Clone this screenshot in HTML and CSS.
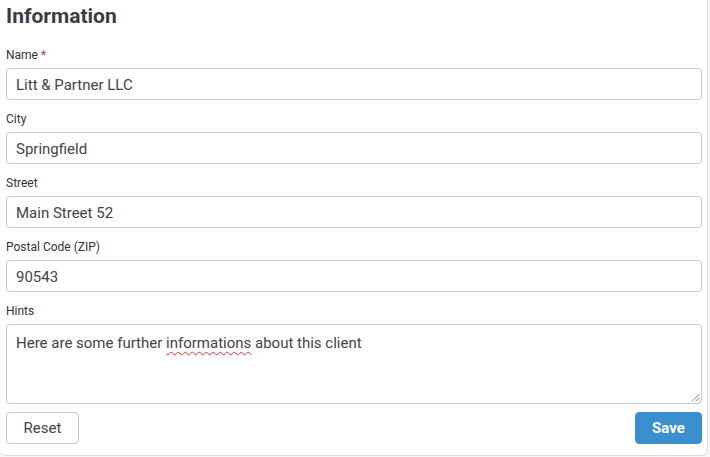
FILE: index.html
```html
<!DOCTYPE html>
<html>
<head>
<meta charset="utf-8">
<link rel="stylesheet" href="styles.css">
</head>
<body>
<div class="card">
  <h2 class="title">Information</h2>
  <form class="form">
    <div class="group">
      <label class="label">Name <span class="req">*</span></label>
      <input class="input" type="text" value="Litt &amp; Partner LLC">
    </div>
    <div class="group">
      <label class="label">City</label>
      <input class="input" type="text" value="Springfield">
    </div>
    <div class="group">
      <label class="label">Street</label>
      <input class="input" type="text" value="Main Street 52">
    </div>
    <div class="group">
      <label class="label">Postal Code (ZIP)</label>
      <input class="input" type="text" value="90543">
    </div>
    <div class="group">
      <label class="label">Hints</label>
      <div class="textarea">Here are some further <span class="misspelled">informations</span> about this client<svg class="grip" width="9" height="9" viewBox="0 0 9 9"><path d="M8.5 1 L1 8.5 M8.5 4.5 L4.5 8.5 M8.5 7.5 L7.5 8.5" stroke="#888" stroke-width="1" fill="none"/></svg></div>
    </div>
    <div class="actions">
      <button type="button" class="btn btn-reset">Reset</button>
      <button type="button" class="btn btn-save">Save</button>
    </div>
  </form>
</div>
</body>
</html>
```
FILE: styles.css
```css
html, body {
  margin: 0;
  padding: 0;
  background: #f6f6f6;
}
body {
  font-family: Roboto, "Liberation Sans", sans-serif;
  color: #333;
}
.card {
  background: #fff;
  margin-top: -6px;
  padding: 6px 5px 10px 6px;
  box-sizing: border-box;
  width: 708px;
  height: 462px;
  border: 1px solid #dcdcdc;
  border-top: none;
  border-left: none;
  border-radius: 0 0 6px 6px;
}
.title {
  margin: 4px 0 0 0;
  font-size: 21px;
  line-height: 25px;
  font-weight: 700;
  color: #3a3d40;
}
.form {
  margin-top: 18px;
  display: flex;
  flex-direction: column;
  gap: 11px;
}
.group {
  display: flex;
  flex-direction: column;
  gap: 5px;
}
.label {
  font-size: 12px;
  line-height: 16px;
  color: #333;
}
.req {
  color: #a94442;
}
.input {
  height: 32px;
  box-sizing: border-box;
  border: 1px solid #c8c8c8;
  border-radius: 4px;
  padding: 2px 9px 0 9px;
  font-family: Roboto, "Liberation Sans", sans-serif;
  font-size: 15px;
  color: #444;
  background: #fff;
  margin: 0;
  width: 100%;
  outline: none;
}
.textarea {
  position: relative;
  height: 80px;
  box-sizing: border-box;
  border: 1px solid #c8c8c8;
  border-radius: 4px;
  padding: 8px 9px;
  font-size: 15px;
  line-height: 20px;
  color: #444;
}
.misspelled {
  text-decoration: underline wavy #e0342c;
  text-decoration-thickness: 1px;
  text-underline-offset: 3px;
}
.grip {
  position: absolute;
  right: 1px;
  bottom: 1px;
}
.actions {
  display: flex;
  justify-content: space-between;
  margin-top: -3px;
}
.btn {
  height: 32px;
  box-sizing: border-box;
  border-radius: 4px;
  font-family: Roboto, "Liberation Sans", sans-serif;
  font-size: 15px;
  padding: 0;
  cursor: pointer;
}
.btn-reset {
  background: #fff;
  border: 1px solid #c8c8c8;
  color: #444;
  width: 73px;
}
.btn-save {
  background: #3b8fcd;
  border: 1px solid #3b8fcd;
  color: #fff;
  font-weight: 700;
  width: 67px;
}
```
